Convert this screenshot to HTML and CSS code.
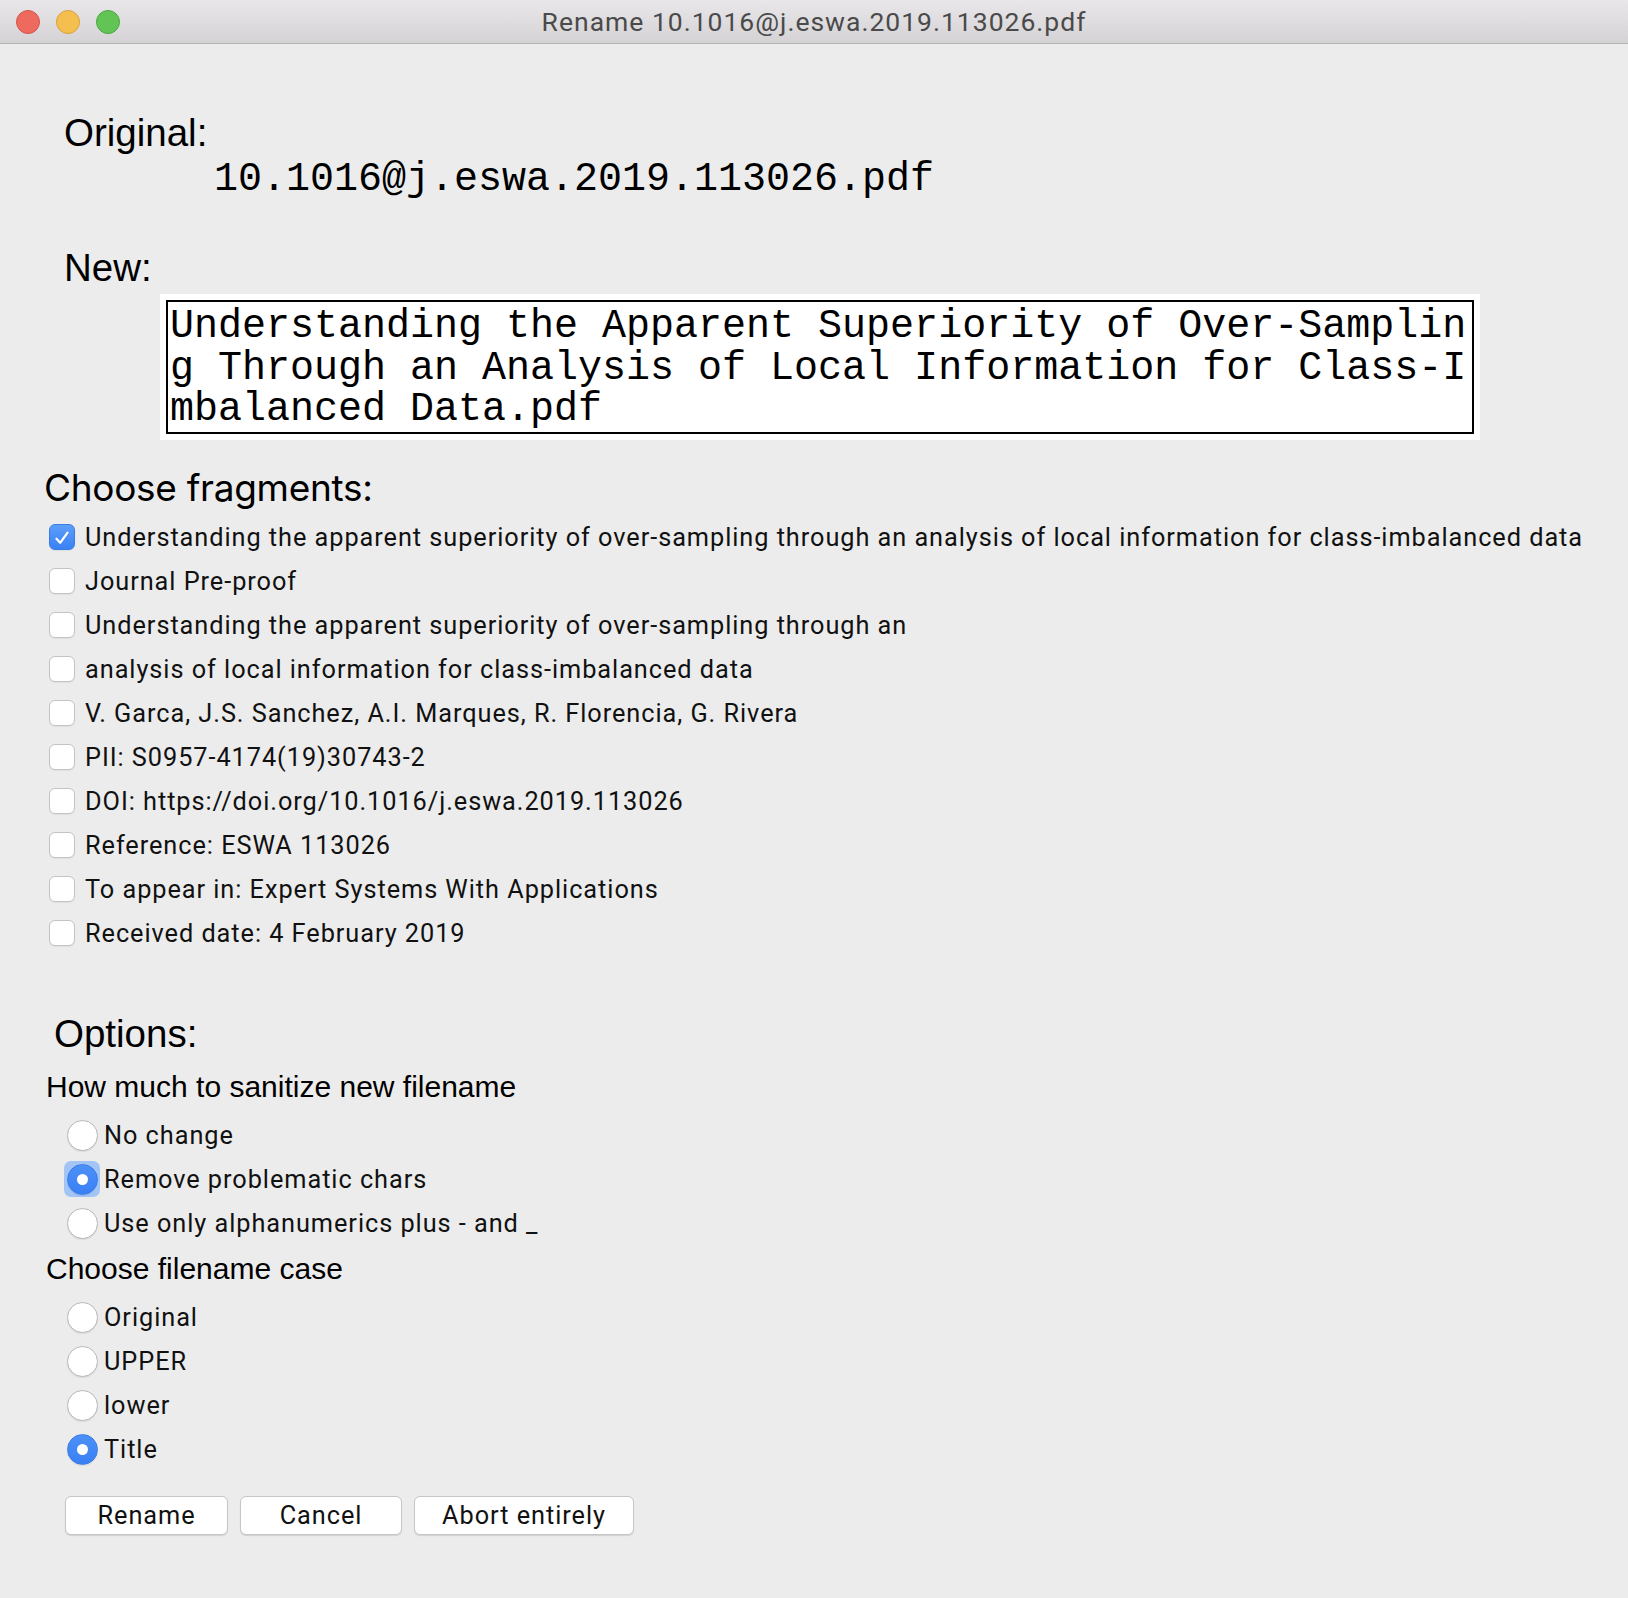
FILE: index.html
```html
<!DOCTYPE html>
<html>
<head>
<meta charset="utf-8">
<title>Rename</title>
<link rel="stylesheet" href="styles.css">
</head>
<body>
<div class="window">
  <div class="titlebar">
    <div class="lights">
      <span class="light red"></span>
      <span class="light yellow"></span>
      <span class="light green"></span>
    </div>
    <div class="title">Rename 10.1016@j.eswa.2019.113026.pdf</div>
  </div>

  <div class="content">
    <div class="big-label original-label">Original:</div>
    <div class="mono original-name">10.1016@j.eswa.2019.113026.pdf</div>

    <div class="big-label new-label">New:</div>
    <div class="newbox-wrap">
      <div class="newbox">Understanding the Apparent Superiority of Over-Samplin<br>g Through an Analysis of Local Information for Class-I<br>mbalanced Data.pdf</div>
    </div>

    <div class="section-title">Choose fragments:</div>
    <div class="fragments">
      <div class="cb-row"><span class="cb checked"><svg viewBox="0 0 26 26" width="26" height="26"><path d="M7 13.8 L11 18.2 L19 7.2" fill="none" stroke="#fff" stroke-width="2.4" stroke-linecap="round" stroke-linejoin="round"/></svg></span><span class="cb-text">Understanding the apparent superiority of over-sampling through an analysis of local information for class-imbalanced data</span></div>
      <div class="cb-row"><span class="cb"></span><span class="cb-text">Journal Pre-proof</span></div>
      <div class="cb-row"><span class="cb"></span><span class="cb-text">Understanding the apparent superiority of over-sampling through an</span></div>
      <div class="cb-row"><span class="cb"></span><span class="cb-text">analysis of local information for class-imbalanced data</span></div>
      <div class="cb-row"><span class="cb"></span><span class="cb-text">V. Garca, J.S. Sanchez, A.I. Marques, R. Florencia, G. Rivera</span></div>
      <div class="cb-row"><span class="cb"></span><span class="cb-text">PII: S0957-4174(19)30743-2</span></div>
      <div class="cb-row"><span class="cb"></span><span class="cb-text">DOI: https://doi.org/10.1016/j.eswa.2019.113026</span></div>
      <div class="cb-row"><span class="cb"></span><span class="cb-text">Reference: ESWA 113026</span></div>
      <div class="cb-row"><span class="cb"></span><span class="cb-text">To appear in: Expert Systems With Applications</span></div>
      <div class="cb-row"><span class="cb"></span><span class="cb-text">Received date: 4 February 2019</span></div>
    </div>

    <div class="big-label options-label">Options:</div>
    <div class="sub-label sanitize-label">How much to sanitize new filename</div>
    <div class="radios">
      <div class="rb-row"><span class="rb-wrap"><span class="rb"></span></span><span class="rb-text">No change</span></div>
      <div class="rb-row"><span class="rb-wrap focus"><span class="rb on"></span></span><span class="rb-text">Remove problematic chars</span></div>
      <div class="rb-row"><span class="rb-wrap"><span class="rb"></span></span><span class="rb-text">Use only alphanumerics plus - and _</span></div>
    </div>
    <div class="sub-label case-label">Choose filename case</div>
    <div class="radios">
      <div class="rb-row"><span class="rb-wrap"><span class="rb"></span></span><span class="rb-text">Original</span></div>
      <div class="rb-row"><span class="rb-wrap"><span class="rb"></span></span><span class="rb-text">UPPER</span></div>
      <div class="rb-row"><span class="rb-wrap"><span class="rb"></span></span><span class="rb-text">lower</span></div>
      <div class="rb-row"><span class="rb-wrap"><span class="rb on"></span></span><span class="rb-text">Title</span></div>
    </div>

    <div class="buttons">
      <button class="btn btn-rename">Rename</button>
      <button class="btn btn-cancel">Cancel</button>
      <button class="btn btn-abort">Abort entirely</button>
    </div>
  </div>
</div>
</body>
</html>
```

FILE: styles.css
```css
html, body {
  margin: 0;
  padding: 0;
  background: #ececec;
}

.window {
  width: 1628px;
  min-height: 1598px;
  background: #ececec;
}

.titlebar {
  position: relative;
  height: 43px;
  background: linear-gradient(#e9e7e9, #d4d2d4);
  border-bottom: 1px solid #b3b3b3;
  display: flex;
  align-items: center;
  justify-content: center;
}

.lights {
  position: absolute;
  left: 16px;
  top: 10px;
  display: flex;
  gap: 16px;
}

.light {
  width: 24px;
  height: 24px;
  border-radius: 50%;
  box-sizing: border-box;
}

.light.red { background: #ee6a5f; border: 1px solid #d5544a; }
.light.yellow { background: #f5bf4f; border: 1px solid #d9a23a; }
.light.green { background: #61c454; border: 1px solid #4ca73f; }

.title {
  font-family: "Roboto", "Liberation Sans", sans-serif;
  font-size: 26.5px;
  letter-spacing: 1px;
  color: #4a4a4a;
}

.content {
  padding-left: 44px;
}

.big-label {
  font-family: "Liberation Sans", Arial, sans-serif;
  font-size: 38.5px;
  line-height: 44px;
  color: #000;
}

.original-label {
  margin-top: 67px;
  margin-left: 20px;
}

.mono {
  font-family: "Liberation Mono", "Courier New", monospace;
  font-size: 40px;
  color: #000;
}

.original-name {
  margin-top: 3px;
  margin-left: 170px;
  line-height: 44px;
}

.new-label {
  margin-top: 44px;
  margin-left: 20px;
}

.newbox-wrap {
  margin-top: 4px;
  margin-left: 116px;
  width: 1320px;
  box-sizing: border-box;
  padding: 6px;
  background: #fff;
}

.newbox {
  border: 2px solid #000;
  padding: 4px 4px 1.5px 2px;
  font-family: "Liberation Mono", "Courier New", monospace;
  font-size: 40px;
  line-height: 41.5px;
  color: #000;
  white-space: nowrap;
}

.section-title {
  margin-top: 26px;
  font-family: "Inter", "Liberation Sans", sans-serif;
  font-size: 37px;
  line-height: 44px;
  color: #000;
  letter-spacing: -0.3px;
}

.fragments {
  margin-top: 5px;
}

.cb-row {
  height: 44px;
  display: flex;
  align-items: center;
  margin-left: 5px;
  gap: 10px;
}

.cb {
  width: 26px;
  height: 26px;
  box-sizing: border-box;
  border-radius: 6px;
  background: #fff;
  border: 1px solid #c4c4c4;
  box-shadow: 0 1px 1px rgba(0, 0, 0, 0.06);
  flex: none;
  display: flex;
}

.cb.checked {
  background: linear-gradient(#5c9ef9, #3a81f6);
  border-color: #3a7ce6;
}

.cb-text,
.rb-text {
  font-family: "Roboto", "Liberation Sans", sans-serif;
  font-size: 25.3px;
  letter-spacing: 0.95px;
  color: #111;
  white-space: nowrap;
}

.options-label {
  margin-top: 57px;
  margin-left: 10px;
}

.sub-label {
  font-family: "Liberation Sans", Arial, sans-serif;
  font-size: 30px;
  line-height: 44px;
  color: #000;
}

.sanitize-label {
  margin-top: 9px;
  margin-left: 2px;
}

.case-label {
  margin-top: 2px;
  margin-left: 2px;
}

.radios {
  margin-top: 4px;
}

.rb-row {
  height: 44px;
  display: flex;
  align-items: center;
  margin-left: 20px;
  gap: 4px;
}

.rb-wrap {
  width: 36px;
  height: 36px;
  border-radius: 7px;
  display: flex;
  align-items: center;
  justify-content: center;
  flex: none;
}

.rb-wrap.focus {
  background: #a3c5f6;
}

.rb {
  width: 31px;
  height: 31px;
  box-sizing: border-box;
  border-radius: 50%;
  background: #fff;
  border: 1px solid #b9b9b9;
  box-shadow: 0 1px 1px rgba(0, 0, 0, 0.08);
  display: flex;
  align-items: center;
  justify-content: center;
}

.rb.on {
  background: linear-gradient(#4c90f7, #3a80f5);
  border-color: #3a7ce6;
}

.rb.on::after {
  content: "";
  width: 11px;
  height: 11px;
  border-radius: 50%;
  background: #fff;
}

.buttons {
  margin-top: 25px;
  margin-left: 21px;
  display: flex;
  gap: 12px;
}

.btn {
  height: 39px;
  box-sizing: border-box;
  background: #fff;
  border: 1px solid #c6c6c6;
  border-radius: 6px;
  box-shadow: 0 1px 1px rgba(0, 0, 0, 0.12);
  font-family: "Roboto", "Liberation Sans", sans-serif;
  font-size: 25.3px;
  letter-spacing: 0.95px;
  color: #111;
  padding: 0;
}

.btn-rename { width: 163px; }
.btn-cancel { width: 162px; }
.btn-abort { width: 220px; }
```
